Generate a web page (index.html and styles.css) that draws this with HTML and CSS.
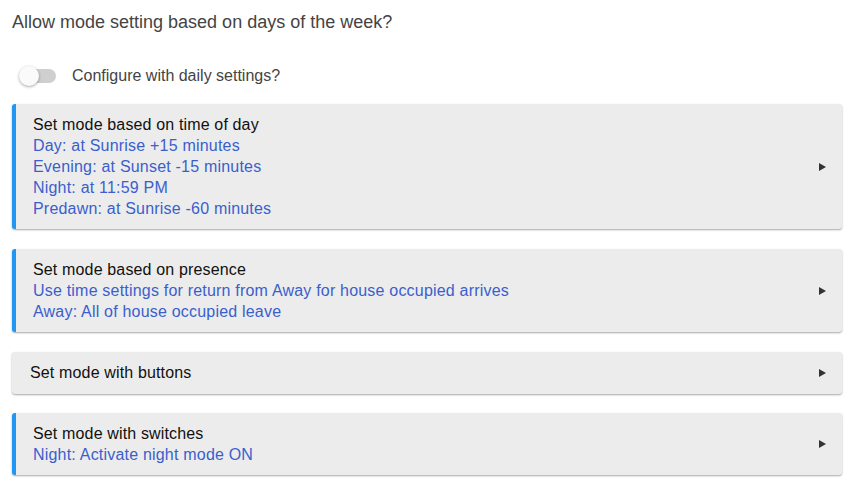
FILE: index.html
```html
<!DOCTYPE html>
<html>
<head>
<meta charset="utf-8">
<link rel="stylesheet" href="styles.css">
</head>
<body>
<div class="page">
  <div class="question">Allow mode setting based on days of the week?</div>
  <div class="toggle-row">
    <span class="switch"><span class="track"></span><span class="knob"></span></span>
    <span class="toggle-label">Configure with daily settings?</span>
  </div>
  <div class="card accent">
    <div class="card-body">
      <div class="card-title">Set mode based on time of day</div>
      <div class="card-line">Day: at Sunrise +15 minutes</div>
      <div class="card-line">Evening: at Sunset -15 minutes</div>
      <div class="card-line">Night: at 11:59 PM</div>
      <div class="card-line">Predawn: at Sunrise -60 minutes</div>
    </div>
    <span class="arrow"></span>
  </div>
  <div class="card accent">
    <div class="card-body">
      <div class="card-title">Set mode based on presence</div>
      <div class="card-line">Use time settings for return from Away for house occupied arrives</div>
      <div class="card-line">Away: All of house occupied leave</div>
    </div>
    <span class="arrow"></span>
  </div>
  <div class="card plain">
    <div class="card-body">
      <div class="card-title">Set mode with buttons</div>
    </div>
    <span class="arrow"></span>
  </div>
  <div class="card accent last">
    <div class="card-body">
      <div class="card-title">Set mode with switches</div>
      <div class="card-line">Night: Activate night mode ON</div>
    </div>
    <span class="arrow"></span>
  </div>
</div>
</body>
</html>
```
FILE: styles.css
```css
html, body {
  margin: 0;
  padding: 0;
  background: #ffffff;
}
.page {
  padding: 11px 10px 0 12px;
  font-family: "Liberation Sans", Arial, Helvetica, sans-serif;
}
.question {
  font-size: 18px;
  line-height: 22px;
  color: #444444;
}
.toggle-row {
  display: flex;
  align-items: center;
  height: 24px;
  margin-top: 31px;
  margin-bottom: 16px;
}
.switch {
  position: relative;
  width: 40px;
  height: 22px;
  margin-left: 7px;
  margin-right: 13px;
  flex: none;
}
.track {
  position: absolute;
  left: 4px;
  top: 4px;
  width: 33px;
  height: 14px;
  border-radius: 7px;
  background: #cfcfcf;
}
.knob {
  position: absolute;
  left: 0;
  top: 1px;
  width: 20px;
  height: 20px;
  border-radius: 50%;
  background: #fafafa;
  box-shadow: 0 1px 3px rgba(0,0,0,0.35);
}
.toggle-label {
  font-size: 16px;
  color: #444444;
}
.card {
  display: flex;
  align-items: center;
  background: #ececec;
  border-radius: 3px;
  box-shadow: 0 1px 2px rgba(0,0,0,0.35);
  margin-bottom: 20px;
  padding: 10px 16px 10px 17px;
}
.card.accent {
  border-left: 4px solid #2196f3;
}
.card.plain {
  padding-left: 18px;
  padding-bottom: 11px;
  margin-bottom: 19px;
}
.card-body {
  flex: 1;
  font-size: 16px;
  line-height: 21px;
  letter-spacing: 0.15px;
}
.card-title {
  color: #111111;
}
.card-line {
  color: #3a5fcc;
  letter-spacing: 0.2px;
}
.arrow {
  flex: none;
  width: 0;
  height: 0;
  border-top: 4px solid transparent;
  border-bottom: 4px solid transparent;
  border-left: 7px solid #333333;
}
```
